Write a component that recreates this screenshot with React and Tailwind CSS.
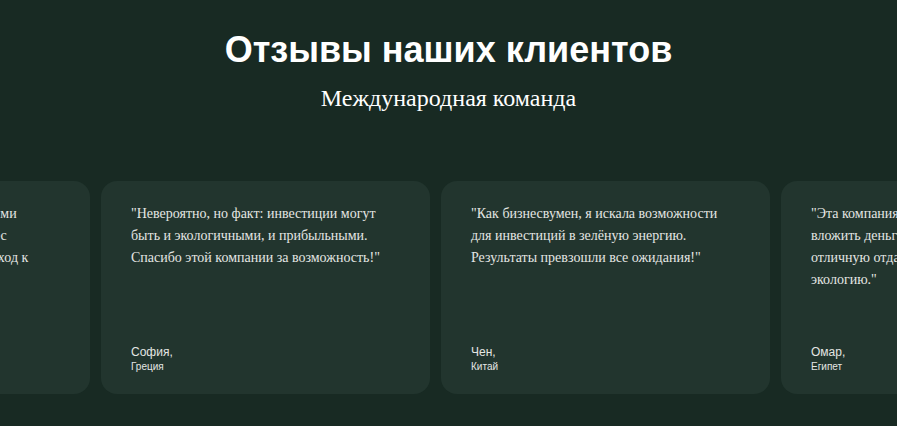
import React from 'react';

const reviews = [
  {
    lines: [
      '"Это прекрасный сервис с реальными',
      'и честными условиями. Наш бизнес',
      'стал чище, а наш доход выше. Подход к',
      'клиентам отличный!"',
    ],
    name: 'Давид,',
    country: 'Израиль',
  },
  {
    text: '"Невероятно, но факт: инвестиции могут быть и экологичными, и прибыльными. Спасибо этой компании за возможность!"',
    name: 'София,',
    country: 'Греция',
  },
  {
    text: '"Как бизнесвумен, я искала возможности для инвестиций в зелёную энергию. Результаты превзошли все ожидания!"',
    name: 'Чен,',
    country: 'Китай',
  },
  {
    lines: [
      '"Эта компания дала мне шанс',
      'вложить деньги с умом и получить',
      'отличную отдачу, поддерживая',
      'экологию."',
    ],
    name: 'Омар,',
    country: 'Египет',
  },
];

const ReviewCard = ({ review }) => (
  <div className="flex h-[213px] w-[329px] shrink-0 flex-col justify-between rounded-2xl bg-[#22352e] px-[30px] pb-[21px] pt-[22px] text-[#e4e6e3]">
    <p className="font-['Liberation_Serif',serif] text-[14px] leading-[22px]">
      {review.lines
        ? review.lines.map((line, i) => (
            <span key={i} className="block whitespace-nowrap">
              {line}
            </span>
          ))
        : review.text}
    </p>
    <div className="font-['Liberation_Sans',Arial,sans-serif]">
      <div className="text-[12px] leading-[15px]">{review.name}</div>
      <div className="text-[10px] leading-[13px]">{review.country}</div>
    </div>
  </div>
);

export default function App() {
  return (
    <div className="h-[426px] w-full overflow-hidden bg-[#182a23]">
      <div className="flex flex-col items-center pt-[27px] text-white">
        <h2 className="font-['Liberation_Sans',Arial,sans-serif] text-[36px] font-bold leading-[46px]">
          Отзывы наших клиентов
        </h2>
        <p className="mt-[10px] font-['Liberation_Serif',serif] text-[24px] leading-[30px]">
          Международная команда
        </p>
      </div>

      {/* карусель отзывов */}
      <div className="mt-[68px] overflow-hidden">
        <div className="ml-[-239px] flex gap-[11px]">
          {reviews.map((review, i) => (
            <ReviewCard key={i} review={review} />
          ))}
        </div>
      </div>
    </div>
  );
}
